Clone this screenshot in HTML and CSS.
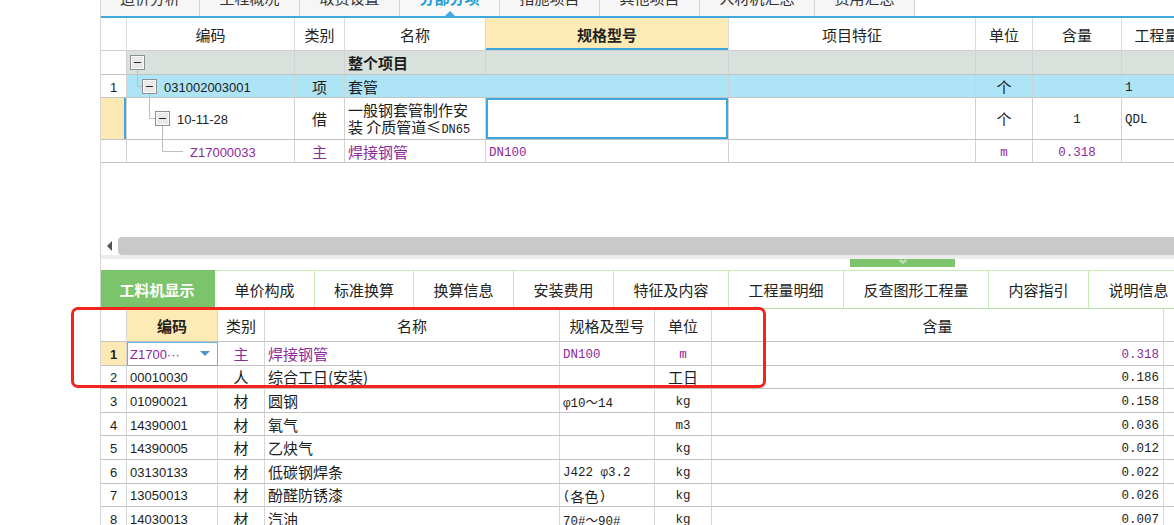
FILE: index.html
```html
<!DOCTYPE html>
<html lang="zh">
<head>
<meta charset="utf-8">
<link rel="stylesheet" href="styles.css">
</head>
<body>
<div class="app">
  <div class="gutter"></div>
  <div class="main">
    <div class="toptabs">
      <div class="ttab first"><span>造价分析</span></div>
      <div class="ttab"><span>工程概况</span></div>
      <div class="ttab"><span>取费设置</span></div>
      <div class="ttab active"><span>分部分项</span><i class="caret"></i></div>
      <div class="ttab"><span>措施项目</span></div>
      <div class="ttab"><span>其他项目</span></div>
      <div class="ttab wide"><span>人材机汇总</span></div>
      <div class="ttab"><span>费用汇总</span></div>
    </div>
    <div class="blueline"></div>

    <div class="upper">
      <div class="row ug head">
        <div class="c"></div>
        <div class="c ctr">编码</div>
        <div class="c ctr">类别</div>
        <div class="c ctr">名称</div>
        <div class="c ctr hl">规格型号</div>
        <div class="c ctr">项目特征</div>
        <div class="c ctr">单位</div>
        <div class="c ctr">含量</div>
        <div class="c ctr">工程量表达式</div>
      </div>

      <div class="row ug r0">
        <div class="c rn"></div>
        <div class="c g tree">
          <svg width="20" height="23" viewBox="0 0 20 23">
            <line x1="10.5" y1="19" x2="10.5" y2="23" stroke="#bdbdbd"/>
            <g transform="translate(3,4)">
              <rect x="0.5" y="0.5" width="14" height="14" fill="#e9e9e9" stroke="#8f8f8f"/>
              <rect x="1.5" y="1.5" width="12" height="12" fill="none" stroke="#fbfbfb"/>
              <line x1="4" y1="7.5" x2="11" y2="7.5" stroke="#2a2a2a"/>
            </g>
          </svg>
        </div>
        <div class="c g"></div>
        <div class="c g pl b">整个项目</div>
        <div class="c g"></div>
        <div class="c g"></div>
        <div class="c g"></div>
        <div class="c g"></div>
        <div class="c g"></div>
      </div>

      <div class="row ug r1">
        <div class="c rn ctr num">1</div>
        <div class="c bl tree">
          <svg width="37" height="22" viewBox="0 0 37 22">
            <path d="M10.5 0V11.5H15M22.5 19V22" fill="none" stroke="#bdbdbd"/>
            <g transform="translate(15,4)">
              <rect x="0.5" y="0.5" width="14" height="14" fill="#e9e9e9" stroke="#8f8f8f"/>
              <rect x="1.5" y="1.5" width="12" height="12" fill="none" stroke="#fbfbfb"/>
              <line x1="4" y1="7.5" x2="11" y2="7.5" stroke="#2a2a2a"/>
            </g>
          </svg>
          <span class="num">031002003001</span>
        </div>
        <div class="c bl ctr">项</div>
        <div class="c bl pl">套管</div>
        <div class="c bl"></div>
        <div class="c bl"></div>
        <div class="c bl ctr">个</div>
        <div class="c bl"></div>
        <div class="c bl pl mono">1</div>
      </div>

      <div class="row ug r2">
        <div class="c rn sel"></div>
        <div class="c tree">
          <svg width="50" height="41" viewBox="0 0 50 41">
            <path d="M22.5 0V20.5H28M35.5 28V41" fill="none" stroke="#bdbdbd"/>
            <g transform="translate(28,13)">
              <rect x="0.5" y="0.5" width="14" height="14" fill="#e9e9e9" stroke="#8f8f8f"/>
              <rect x="1.5" y="1.5" width="12" height="12" fill="none" stroke="#fbfbfb"/>
              <line x1="4" y1="7.5" x2="11" y2="7.5" stroke="#2a2a2a"/>
            </g>
          </svg>
          <span class="num">10-11-28</span>
        </div>
        <div class="c ctr">借</div>
        <div class="c pl"><div class="wrap"><div>一般钢套管制作安</div><div>装 介质管道≤<span class="mono sm">DN65</span></div></div></div>
        <div class="c cellsel"></div>
        <div class="c"></div>
        <div class="c ctr">个</div>
        <div class="c ctr mono">1</div>
        <div class="c pl mono">QDL</div>
      </div>

      <div class="row ug r3">
        <div class="c rn"></div>
        <div class="c tree">
          <svg width="63" height="22" viewBox="0 0 63 22">
            <path d="M35.5 0V11.5H56" fill="none" stroke="#bdbdbd"/>
          </svg>
          <span class="num pu">Z17000033</span>
        </div>
        <div class="c ctr pu">主</div>
        <div class="c pl pu">焊接钢管</div>
        <div class="c pl mono pu">DN100</div>
        <div class="c"></div>
        <div class="c ctr mono pu">m</div>
        <div class="c ctr mono pu">0.318</div>
        <div class="c"></div>
      </div>
    </div>

    <div class="hscroll">
      <div class="sarrow"><i></i></div>
      <div class="track"></div>
    </div>
    <div class="strip"></div>
    <div class="splitter">
      <div class="handle">
        <svg width="12" height="7" viewBox="0 0 12 7"><path d="M2 1.5L6 4.5L10 1.5M3 0.5L6 2.8L9 0.5" fill="none" stroke="#d9f0d2" stroke-width="1"/></svg>
      </div>
    </div>

    <div class="btabs">
      <div class="btab active" style="width:115px">工料机显示</div>
      <div class="btab" style="width:100px">单价构成</div>
      <div class="btab" style="width:99px">标准换算</div>
      <div class="btab" style="width:100px">换算信息</div>
      <div class="btab" style="width:100px">安装费用</div>
      <div class="btab" style="width:115px">特征及内容</div>
      <div class="btab" style="width:115px">工程量明细</div>
      <div class="btab" style="width:145px">反查图形工程量</div>
      <div class="btab" style="width:100px">内容指引</div>
      <div class="btab" style="width:100px">说明信息</div>
    </div>

    <div class="lower">
      <div class="row lg lhead">
        <div class="c"></div>
        <div class="c ctr hl2 b">编码</div>
        <div class="c ctr">类别</div>
        <div class="c ctr">名称</div>
        <div class="c ctr">规格及型号</div>
        <div class="c ctr">单位</div>
        <div class="c ctr">含量</div>
        <div class="c"></div>
      </div>
      <div class="row lg lr">
        <div class="c ctr num rnsel">1</div>
        <div class="c combo">
          <span class="num pu">Z1700···</span>
          <svg width="10" height="5" viewBox="0 0 10 5"><path d="M0 0H10L5 5Z" fill="#4f93c9"/></svg>
        </div>
        <div class="c ctr pu">主</div>
        <div class="c pl pu">焊接钢管</div>
        <div class="c pl mono pu">DN100</div>
        <div class="c ctr mono pu">m</div>
        <div class="c rt mono pu">0.318</div>
        <div class="c"></div>
      </div>
      <div class="row lg lr">
        <div class="c ctr num">2</div>
        <div class="c pl num">00010030</div>
        <div class="c ctr">人</div>
        <div class="c pl">综合工日(安装)</div>
        <div class="c pl mono"></div>
        <div class="c ctr">工日</div>
        <div class="c rt mono">0.186</div>
        <div class="c"></div>
      </div>
      <div class="row lg lr">
        <div class="c ctr num">3</div>
        <div class="c pl num">01090021</div>
        <div class="c ctr">材</div>
        <div class="c pl">圆钢</div>
        <div class="c pl mono">φ10～14</div>
        <div class="c ctr mono">kg</div>
        <div class="c rt mono">0.158</div>
        <div class="c"></div>
      </div>
      <div class="row lg lr">
        <div class="c ctr num">4</div>
        <div class="c pl num">14390001</div>
        <div class="c ctr">材</div>
        <div class="c pl">氧气</div>
        <div class="c pl mono"></div>
        <div class="c ctr mono">m3</div>
        <div class="c rt mono">0.036</div>
        <div class="c"></div>
      </div>
      <div class="row lg lr">
        <div class="c ctr num">5</div>
        <div class="c pl num">14390005</div>
        <div class="c ctr">材</div>
        <div class="c pl">乙炔气</div>
        <div class="c pl mono"></div>
        <div class="c ctr mono">kg</div>
        <div class="c rt mono">0.012</div>
        <div class="c"></div>
      </div>
      <div class="row lg lr">
        <div class="c ctr num">6</div>
        <div class="c pl num">03130133</div>
        <div class="c ctr">材</div>
        <div class="c pl">低碳钢焊条</div>
        <div class="c pl mono">J422 φ3.2</div>
        <div class="c ctr mono">kg</div>
        <div class="c rt mono">0.022</div>
        <div class="c"></div>
      </div>
      <div class="row lg lr">
        <div class="c ctr num">7</div>
        <div class="c pl num">13050013</div>
        <div class="c ctr">材</div>
        <div class="c pl">酚醛防锈漆</div>
        <div class="c pl mono">(<span class="zh">各色</span>)</div>
        <div class="c ctr mono">kg</div>
        <div class="c rt mono">0.026</div>
        <div class="c"></div>
      </div>
      <div class="row lg lr">
        <div class="c ctr num">8</div>
        <div class="c pl num">14030013</div>
        <div class="c ctr">材</div>
        <div class="c pl">汽油</div>
        <div class="c pl mono">70#～90#</div>
        <div class="c ctr mono">kg</div>
        <div class="c rt mono">0.007</div>
        <div class="c"></div>
      </div>
    </div>
  </div>
</div>
<div class="annot"></div>
</body>
</html>
```

FILE: styles.css
```css
* { box-sizing: border-box; margin: 0; padding: 0; }
html, body { width: 1174px; height: 525px; overflow: hidden; background: #fff; }
body {
  font-family: "Noto Sans CJK SC", "Liberation Sans", sans-serif;
  font-size: 15px;
  color: #1c1c1c;
  position: relative;
}
.app { display: flex; height: 525px; }
.gutter { width: 100px; flex: none; }
.main {
  flex: 1;
  min-width: 0;
  border-left: 1px solid #d3d3d3;
  display: flex;
  flex-direction: column;
  overflow: hidden;
}

/* top tabs */
.toptabs { height: 16px; display: flex; flex: none; overflow: hidden; }
.ttab {
  width: 100px; flex: none; position: relative;
  background: #f6f6f6; border-right: 1px solid #d4d4d4;
  text-align: center; line-height: 20px; color: #333;
}
.ttab span { display: block; margin-top: -12px; }
.ttab.first { width: 99px; }
.ttab.wide { width: 115px; }
.ttab.active { color: #1f9bd8; font-weight: bold; background: #f9f9f9; }
.caret {
  position: absolute; bottom: 0; left: 50%; margin-left: -5px;
  width: 0; height: 0;
  border-left: 5px solid transparent; border-right: 5px solid transparent;
  border-bottom: 5px solid #41a9dd;
}
.blueline { height: 2px; background: #3fa8dc; flex: none; }

/* grids */
.row { display: grid; }
.c {
  border-right: 1px solid #d2d2d2;
  border-bottom: 1px solid #c3c3c3;
  display: flex; align-items: center;
  white-space: nowrap; overflow: hidden;
  min-width: 0;
}
.ctr { justify-content: center; }
.rt { justify-content: flex-end; padding-right: 4px; }
.pl { padding-left: 3px; }
.b { font-weight: bold; }
.num { font-family: "Liberation Sans", "Noto Sans CJK SC", sans-serif; font-size: 13px; padding-top: 2px; }
.mono { font-family: "Liberation Mono", "Noto Sans CJK SC", monospace; font-size: 12.5px; padding-top: 3px; }
.mono.sm { font-size: 12px; padding-top: 0; }
.zh { font-family: "Noto Sans CJK SC", sans-serif; font-size: 14px; }
.pu { color: #8d2a9b; }

.upper { height: 219px; flex: none; overflow: hidden; }
.ug { grid-template-columns: 26px 168px 50px 141px 243px 247px 57px 89px 116px; }
.head .c { height: 33px; border-right-color: #dadada; border-bottom-color: #cfcfcf; color: #222; }
.head .hl { background: #fdeab5; font-weight: bold; box-shadow: inset 0 -2px 0 #3ea7db; }
.r0 .c { height: 24px; }
.r1 .c { height: 23px; }
.r2 .c { height: 42px; }
.r3 .c { height: 23px; }
.g { background: #d9e1dd; }
.bl { background: #ade5f7; }
.rn { background: #fff; }
.rn.sel { background: #fde9b3; box-shadow: inset -2px 0 0 #3ea7db; }
.tree svg { flex: none; display: block; }
.tree .num { padding-top: 2px; }
.wrap { white-space: nowrap; line-height: 17px; padding-top: 2px; }
.cellsel { box-shadow: inset 0 0 0 2px #3ea7db; }

/* scrollbar */
.hscroll { height: 18px; flex: none; display: flex; }
.sarrow { width: 16px; flex: none; background: #fff; display: flex; align-items: center; justify-content: center; }
.sarrow i {
  width: 0; height: 0;
  border-top: 5px solid transparent; border-bottom: 5px solid transparent;
  border-right: 5px solid #555;
}
.track { flex: 1; background: #c9c9c9; border-radius: 4px 0 0 4px; margin-left: 1px; }
.strip { height: 4px; flex: none; background: #ececec; }
.splitter { height: 11px; flex: none; padding-left: 749px; }
.handle {
  width: 105px; height: 8px; background: #7dc46d;
  display: flex; justify-content: center; align-items: flex-start;
}
.handle svg { display: block; }

/* bottom tabs */
.btabs { height: 39px; flex: none; display: flex; margin-left: -1px; overflow: hidden; }
.btab {
  flex: none; display: flex; align-items: center; justify-content: center;
  border-top: 1px solid #c5eab6; border-bottom: 1px solid #b4e0a2; border-right: 1px solid #c5eab6;
  color: #222; font-size: 15px; white-space: nowrap;
}
.btab.active { background: #7cc46b; border-color: #7cc46b; color: #fff; font-weight: bold; }

/* lower grid */
.lower { flex: 1; overflow: hidden; }
.lg { grid-template-columns: 26px 91px 47px 295px 95px 57px 452px 120px; }
.lg .c { border-right-color: #d6d6d6; border-bottom-color: #c2c2c2; }
.lhead .c { height: 33px; color: #222; }
.lhead .hl2 { background: #fdeab5; }
.lr .c { height: 23.6px; }
.rnsel { background: #fde9b3; font-weight: bold; }
.lg .combo {
  border: 1px solid #9aa2aa; border-top-color: #62b3e2;
  justify-content: space-between; padding: 0 7px 0 2px;
}

/* annotation overlay */
.annot {
  position: absolute; left: 71px; top: 307px;
  width: 695px; height: 81px;
  border: 3px solid #f4241c; border-radius: 7px;
  pointer-events: none;
}
```
